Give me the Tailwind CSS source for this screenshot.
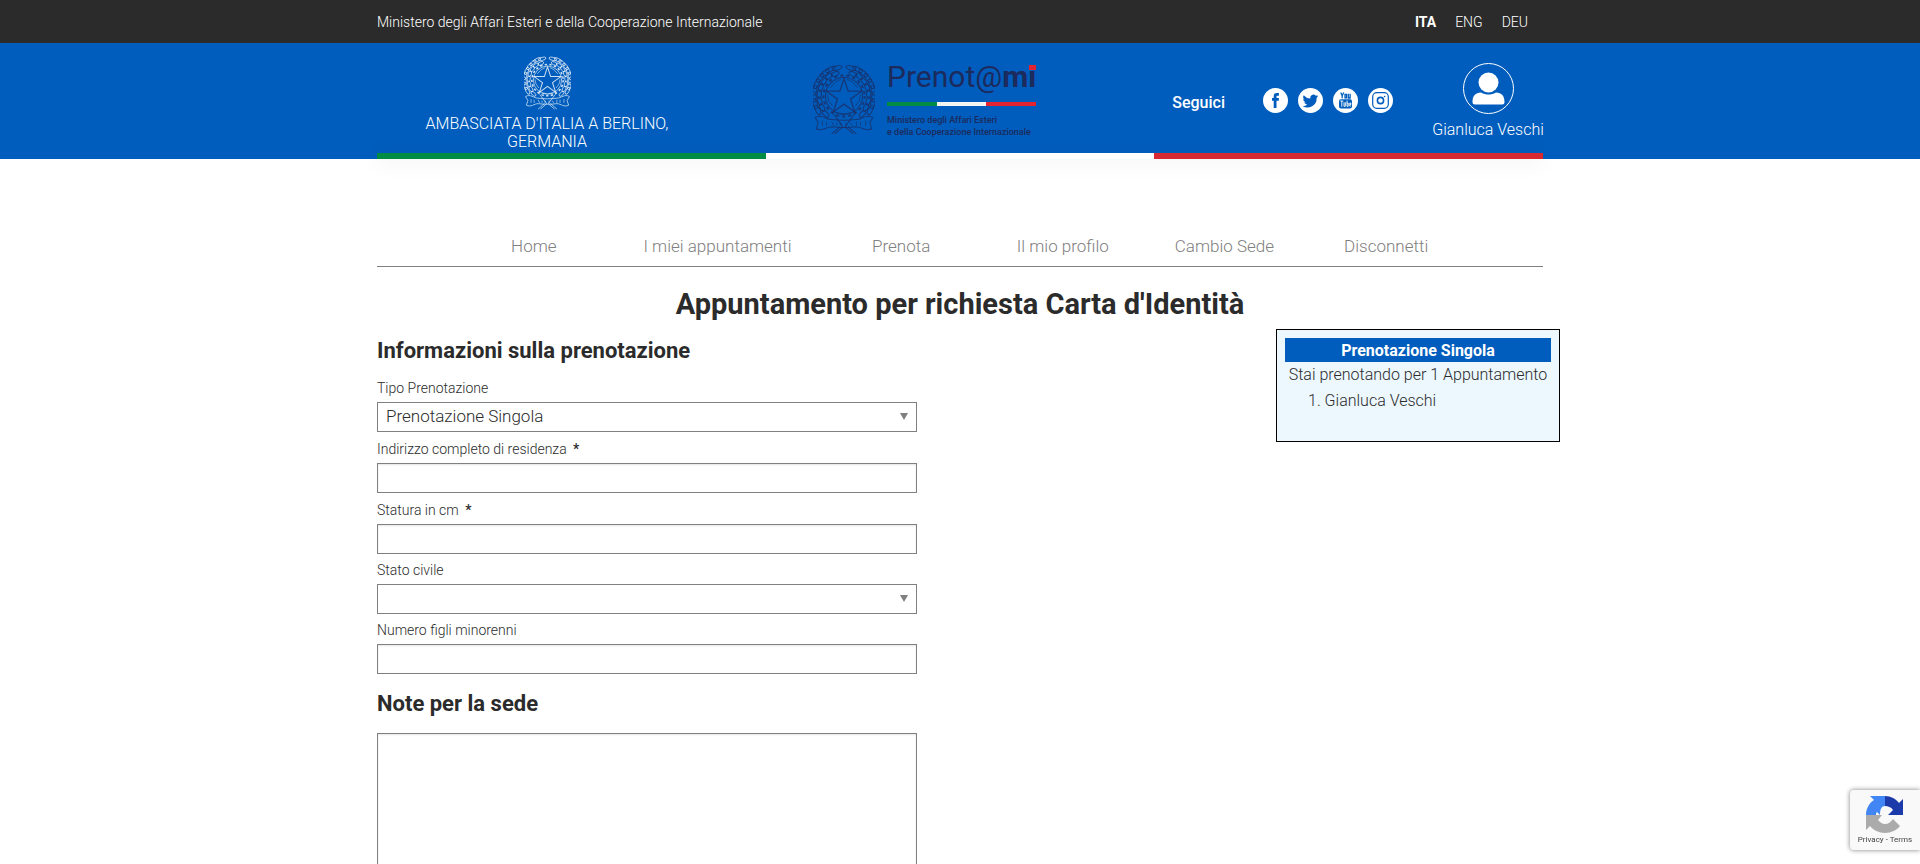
<!DOCTYPE html>
<html lang="it">
<head>
<meta charset="utf-8">
<meta name="viewport" content="width=device-width, initial-scale=1">
<title>Prenot@mi - Appuntamento per richiesta Carta d'Identità</title>
<script src="https://cdn.jsdelivr.net/npm/@tailwindcss/browser@4"></script>
</head>
<body class="bg-white font-['Roboto','Liberation_Sans',sans-serif] text-base font-light text-[#2b2b2b]">

<svg class="hidden" aria-hidden="true">
  <defs>
    <g id="leaves" fill="none" stroke="currentColor">
      <ellipse cx="30" cy="4" rx="5" ry="2" transform="rotate(14 30 32)"/>
      <ellipse cx="30" cy="3" rx="5" ry="2" transform="rotate(27 30 32)"/>
      <ellipse cx="30" cy="3" rx="5" ry="2" transform="rotate(40 30 32)"/>
      <ellipse cx="30" cy="3" rx="5" ry="2" transform="rotate(53 30 32)"/>
      <ellipse cx="30" cy="3" rx="5" ry="2" transform="rotate(66 30 32)"/>
      <ellipse cx="30" cy="3" rx="5" ry="2" transform="rotate(79 30 32)"/>
      <ellipse cx="30" cy="3" rx="5" ry="2" transform="rotate(92 30 32)"/>
      <ellipse cx="30" cy="3" rx="5" ry="2" transform="rotate(105 30 32)"/>
      <ellipse cx="30" cy="3" rx="5" ry="2" transform="rotate(118 30 32)"/>
      <ellipse cx="30" cy="9" rx="4" ry="2" transform="rotate(22 30 32)"/>
      <ellipse cx="30" cy="8" rx="4" ry="2" transform="rotate(38 30 32)"/>
      <ellipse cx="30" cy="8" rx="4" ry="2" transform="rotate(54 30 32)"/>
      <ellipse cx="30" cy="8" rx="4" ry="2" transform="rotate(70 30 32)"/>
      <ellipse cx="30" cy="8" rx="4" ry="2" transform="rotate(86 30 32)"/>
      <ellipse cx="30" cy="8" rx="4" ry="2" transform="rotate(102 30 32)"/>
      <ellipse cx="30" cy="8" rx="4" ry="2" transform="rotate(118 30 32)"/>
      <ellipse cx="30" cy="7" rx="4" ry="2" transform="rotate(134 30 32)"/>
    </g>
    <symbol id="emblem" viewBox="0 0 60 70">
      <use href="#leaves"/>
      <use href="#leaves" transform="translate(60 0) scale(-1 1)"/>
      <g fill="none" stroke="currentColor">
        <circle cx="30" cy="32" r="20" stroke-width="2" stroke-dasharray="3 3"/>
        <circle cx="30" cy="32" r="18"/>
        <path d="M30 15l4 12.400h13l-10.600 7.700 4 12.500-10.400-7.600-10.400 7.600 4-12.500L13 27.400h13z" stroke-width="1.300"/>
        <path d="M17 24q5-7 10-8M43 24q-5-7-10-8M14 31q0 6 5 11M46 31q0 6-5 11M23 48q7 3 14 0" stroke-width=".8"/>
        <path d="M2 53c6-4 10 2 16 2 8 1 16 1 24 0 6 0 10-6 16-2l-3 5 2 6c-6 3-10-2-15-2-8 1-16 1-24 0-5 0-9 5-15 2l2-6z"/>
        <path d="M18 69l8-7M42 69l-8-7M21 69l8-7M39 69l-8-7M20 50l9 12M40 50l-9 12"/>
        <path d="M9 56v5M13 57v4M18 57l2 4M23 58v3M27 58v3M32 58v3M36 58l2 3M42 57v4M46 57v4M51 56v5" stroke-width=".8"/>
      </g>
    </symbol>
  </defs>
</svg>

<div class="bg-[#2b2b2b] text-sm text-white">
  <div class="mx-auto flex h-[43px] w-full max-w-[1166px] items-center justify-between">
    <a href="#">Ministero degli Affari Esteri e della Cooperazione Internazionale</a>
    <nav class="mr-[15px] flex gap-[19px]" aria-label="Lingua">
      <a href="#" class="font-bold">ITA</a>
      <a href="#">ENG</a>
      <a href="#">DEU</a>
    </nav>
  </div>
</div>

<header class="bg-[#005dbd] text-white">
  <div class="mx-auto flex h-[110px] w-full max-w-[1166px] justify-between">
    <a href="#" class="flex w-[340px] flex-col items-center pt-[12px] text-center leading-[18px]">
      <svg class="mb-[5px] h-[55px] w-[47px] shrink-0 text-white/80"><use href="#emblem"/></svg>
      <span class="w-[260px]">AMBASCIATA D'ITALIA A BERLINO, GERMANIA</span>
    </a>
    <a href="#" class="flex gap-[12px] pt-[20px] text-[#1c2a5c]">
      <svg class="h-[72px] w-[62px] text-[#1c2a5c]/70"><use href="#emblem"/></svg>
      <div class="w-[154px] font-medium">
        <div class="-mt-[6px] flex h-[40px] items-center text-[30px] leading-none whitespace-nowrap">
          <span class="font-normal">Prenot@</span><span class="relative font-bold">mi<span class="absolute top-[3px] right-0 h-[5px] w-[7px] bg-[#e32430]"></span></span>
        </div>
        <div class="mt-[5px] mr-[5px] flex h-[4px]"><span class="flex-1 bg-[#008c45]"></span><span class="flex-1 bg-[#f4f5f0]"></span><span class="flex-1 bg-[#e32430]"></span></div>
        <p class="mt-[8px] text-[9px] leading-[12px] whitespace-nowrap">Ministero degli Affari Esteri<br>e della Cooperazione Internazionale</p>
      </div>
    </a>
    <div class="flex w-[406px] justify-end pt-[20px]">
      <span class="mr-[38px] pt-[28px] leading-6 font-medium">Seguici</span>
      <div class="mr-[40px] flex gap-[10px] pt-[25px]">
        <a href="#" aria-label="Facebook"><svg class="size-[25px]" viewBox="0 0 25 25"><circle cx="12.500" cy="12.500" r="12.500" fill="#fff"/><path fill="#005dbd" d="M10.700 20v-7.200H9V10h1.700V8.300c0-2.200 1-3.300 3-3.300h2.200v2.700h-1.400c-.8 0-1 .3-1 1V10H16l-.3 2.800h-2.200V20z"/></svg></a>
        <a href="#" aria-label="Twitter"><svg class="size-[25px]" viewBox="0 0 25 25"><circle cx="12.500" cy="12.500" r="12.500" fill="#fff"/><path fill="#005dbd" d="M20.200 8.100c-.6.300-1.200.4-1.800.5.700-.4 1.100-1 1.400-1.700-.6.400-1.300.6-2 .8a3.200 3.200 0 0 0-5.500 2.900A9.100 9.100 0 0 1 5.700 7.200a3.200 3.200 0 0 0 1 4.300c-.5 0-1-.2-1.500-.4 0 1.600 1.100 2.900 2.600 3.200-.5.100-1 .1-1.500 0 .4 1.300 1.600 2.200 3 2.200A6.500 6.500 0 0 1 4.600 18a9.100 9.100 0 0 0 14-8.100c.6-.5 1.200-1.100 1.600-1.800z"/></svg></a>
        <a href="#" aria-label="YouTube"><svg class="size-[25px]" viewBox="0 0 25 25"><circle cx="12.500" cy="12.500" r="12.500" fill="#fff"/><g fill="none" stroke="#005dbd" stroke-width="1.300"><path d="M7.700 4.500l1.500 3.200 1.500-3.200M9.200 7.700v2.600M12 6.300h1.500v3.600H12zM15.300 5.700v4.300h1.800V5.700"/></g><rect x="6" y="11.200" width="13" height="9.300" rx="2" fill="#005dbd"/><path d="M7.300 13h3M8.800 13v5.700M11 14.300v4h1.300v-4M14 12.600v5.700h1.200v-3.200H14M17.900 18h-1.100v-3h1v1.500h-1" fill="none" stroke="#fff" stroke-width=".9"/></svg></a>
        <a href="#" aria-label="Instagram"><svg class="size-[25px]" viewBox="0 0 25 25"><circle cx="12.500" cy="12.500" r="12.500" fill="#fff"/><g fill="none" stroke="#005dbd" stroke-width="1.200"><rect x="4.700" y="4.700" width="15.600" height="15.600" rx="4"/><circle cx="12.500" cy="12.500" r="3.100" stroke-width="1.600"/></g><circle cx="16.600" cy="8.500" r=".8" fill="#005dbd"/></svg></a>
      </div>
      <a href="#" class="flex w-[110px] flex-col items-center whitespace-nowrap">
        <svg class="size-[51px]" viewBox="0 0 51 51"><circle cx="25.500" cy="25.500" r="25" fill="none" stroke="#fff"/><circle cx="25.500" cy="19.500" r="10" fill="#fff"/><path fill="#fff" d="M9.500 39c0-6 3-9.500 8.500-9.500 5 2.800 10 2.800 15 0 5.500 0 8.500 3.500 8.500 9.500 0 1.700-.8 2.500-2.500 2.500H12c-1.700 0-2.500-.8-2.500-2.500z"/></svg>
        <span class="mt-[4px] leading-6">Gianluca Veschi</span>
      </a>
    </div>
  </div>
  <div class="mx-auto flex h-[6px] w-full max-w-[1166px] shadow-[0_2px_20px_rgba(0,0,0,0.1)]"><span class="flex-1 bg-[#008c45]"></span><span class="flex-1 bg-white"></span><span class="flex-1 bg-[#d62931]"></span></div>
</header>

<main class="mx-auto w-full max-w-[1166px] pt-[72px]">
  <nav class="grid grid-cols-[162fr_206fr_162fr_162fr_162fr_162fr] border-b border-[#808080] px-[76px] pt-[3px] pb-[8px] text-center text-[17px] leading-6 text-[#808080]" aria-label="Menu principale">
    <a href="#">Home</a>
    <a href="#">I miei appuntamenti</a>
    <a href="#">Prenota</a>
    <a href="#">Il mio profilo</a>
    <a href="#">Cambio Sede</a>
    <a href="#">Disconnetti</a>
  </nav>

  <h1 class="mt-[17px] text-center text-[29px] leading-[40px] font-bold">Appuntamento per richiesta Carta d'Identità</h1>

  <div class="mt-[5px] flex items-start justify-between">
    <form class="w-[540px]">
      <h2 class="mt-[6px] text-[22px] leading-8 font-bold">Informazioni sulla prenotazione</h2>
      <label for="tipo" class="mt-[9px] mb-[2px] block text-sm leading-6">Tipo Prenotazione</label>
      <div class="relative">
        <select id="tipo" class="block h-[30px] w-full appearance-none border border-[#808080] bg-white px-[8px] text-[17px]"><option>Prenotazione Singola</option></select>
        <svg class="pointer-events-none absolute top-[11px] right-[9px] h-[7px] w-[8px]" viewBox="0 0 8 7"><path fill="#808080" d="M0 0h8L4 7z"/></svg>
      </div>
      <label for="indirizzo" class="mt-[5px] mb-[2px] block text-sm leading-6">Indirizzo completo di residenza <b class="ml-[3px] font-medium">*</b></label>
      <input id="indirizzo" type="text" class="block h-[30px] w-full border border-[#808080] px-[8px] text-[17px] shadow-[inset_0_1px_2px_rgba(0,0,0,0.1)]">
      <label for="statura" class="mt-[5px] mb-[2px] block text-sm leading-6">Statura in cm <b class="ml-[3px] font-medium">*</b></label>
      <input id="statura" type="text" class="block h-[30px] w-full border border-[#808080] px-[8px] text-[17px] shadow-[inset_0_1px_2px_rgba(0,0,0,0.1)]">
      <label for="stato" class="mt-[4px] mb-[2px] block text-sm leading-6">Stato civile</label>
      <div class="relative">
        <select id="stato" class="block h-[30px] w-full appearance-none border border-[#808080] bg-white px-[8px] text-[17px]"><option></option></select>
        <svg class="pointer-events-none absolute top-[11px] right-[9px] h-[7px] w-[8px]" viewBox="0 0 8 7"><path fill="#808080" d="M0 0h8L4 7z"/></svg>
      </div>
      <label for="figli" class="mt-[4px] mb-[2px] block text-sm leading-6">Numero figli minorenni</label>
      <input id="figli" type="text" class="block h-[30px] w-full border border-[#808080] px-[8px] text-[17px] shadow-[inset_0_1px_2px_rgba(0,0,0,0.1)]">
      <h2 class="mt-[14px] text-[22px] leading-8 font-bold"><label for="note">Note per la sede</label></h2>
      <textarea id="note" rows="8" class="mt-[13px] block w-full resize-none border border-[#808080] px-[8px] text-[17px] shadow-[inset_0_1px_2px_rgba(0,0,0,0.1)]"></textarea>
    </form>

    <aside class="-mr-[17px] min-h-[113px] w-[284px] border border-black bg-[#ecf7fe] p-[8px]">
      <h3 class="bg-[#005dbd] pt-px text-center leading-[23px] font-bold text-white">Prenotazione Singola</h3>
      <p class="text-center leading-[26px] whitespace-nowrap">Stai prenotando per 1 Appuntamento</p>
      <ol class="list-inside list-decimal pl-[23px] leading-[26px]"><li>Gianluca Veschi</li></ol>
    </aside>
  </div>
</main>

<div class="fixed right-0 bottom-[14px] flex h-[60px] w-[70px] flex-col items-center rounded-l-sm bg-[#f9f9f9] pt-[6px] shadow-[0_0_5px_gray]">
  <svg class="size-[38px] shrink-0" viewBox="0 0 38 38">
    <path fill="#1c3aa9" d="M19 0c6 0 11 3 14 7l4-4v16H22l5-5c-2-3-5-4-8-4z"/>
    <path fill="#4285f4" d="M19 0H4l4 4C3 7 0 13 0 19h10c0-1 0-2 1-3l3 3c0-5 1-9 5-9z"/>
    <path fill="#ababab" d="M0 19v15l4-4c3 4 9 7 15 7 6 0 12-3 15-7l-7-7c-2 3-5 5-8 5-3 0-5-2-7-4l4-5z"/>
  </svg>
  <p class="text-[8px] leading-[12px] font-normal whitespace-nowrap text-[#444]"><a href="#">Privacy</a> - <a href="#">Terms</a></p>
</div>
</body>
</html>
